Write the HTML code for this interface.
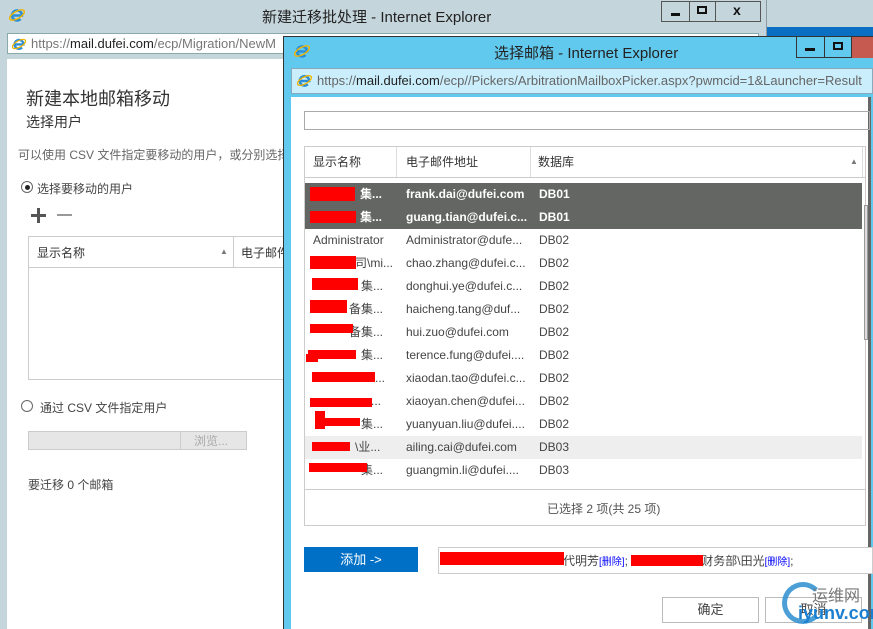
<!DOCTYPE html>
<html><head><meta charset="utf-8"><style>
*{margin:0;padding:0;box-sizing:border-box}
body{width:873px;height:629px;overflow:hidden;position:relative;background:#c5d5dc;font-family:"Liberation Sans","Noto Sans CJK SC",sans-serif;color:#444}
.a{position:absolute;white-space:nowrap}
.r{position:absolute;background:#f00}
.row{position:absolute;left:305px;width:557px;height:23px;font-size:12px;line-height:23px}
.row span{position:absolute}
.row .c2{left:101px}.row .c3{left:234px}
.sel{background:#646663;color:#fff;font-weight:bold}
</style></head><body>
<svg width="0" height="0" style="position:absolute"><defs><symbol id="ie" viewBox="0 0 18 18"><path d="M4 9.5 H14 A5 5 0 1 0 12.5 13" fill="none" stroke="#2a8fd6" stroke-width="2.6"/><ellipse cx="9" cy="9" rx="8.2" ry="3.6" fill="none" stroke="#f0b400" stroke-width="1.4" transform="rotate(-30 9 9)"/></symbol></defs></svg>
<!-- back window -->
<div class="a" style="left:0;top:0;width:767px;height:629px;background:#c5d5dc;border-right:1px solid #8a9aa0"></div>
<div class="a" style="left:767px;top:27px;width:106px;height:9px;background:#0a6fc2"></div>
<svg class="a" style="left:8px;top:6px" width="18" height="18"><use href="#ie"/></svg>
<div class="a" style="left:262px;top:6px;font-size:15px;color:#222">新建迁移批处理 - Internet Explorer</div>
<div class="a" style="left:661px;top:1px;width:100px;height:21px;border:1px solid #555;background:#c5d5dc"></div>
<div class="a" style="left:689px;top:1px;width:1px;height:21px;background:#555"></div>
<div class="a" style="left:715px;top:1px;width:1px;height:21px;background:#555"></div>
<div class="a" style="left:671px;top:13px;width:9px;height:3px;background:#111"></div>
<div class="a" style="left:697px;top:6px;width:10px;height:8px;border:2px solid #111"></div>
<div class="a" style="left:733px;top:2px;font-size:14px;font-weight:bold;color:#111">x</div>
<div class="a" style="left:7px;top:33px;width:752px;height:21px;background:#fff;border:1px solid #8aa"></div>
<svg class="a" style="left:11px;top:36px" width="16" height="16" viewBox="0 0 18 18"><use href="#ie"/></svg>
<div class="a" style="left:31px;top:36px;font-size:13px;color:#777">https://<span style="color:#222">mail.dufei.com</span>/ecp/Migration/NewM</div>
<div class="a" style="left:7px;top:59px;width:280px;height:570px;background:#fff"></div>
<div class="a" style="left:26px;top:85px;font-size:18px;color:#333">新建本地邮箱移动</div>
<div class="a" style="left:26px;top:112px;font-size:14px;color:#333">选择用户</div>
<div class="a" style="left:18px;top:146px;font-size:12px;color:#666">可以使用 CSV 文件指定要移动的用户，或分别选择</div>
<div class="a" style="left:21px;top:181px;width:12px;height:12px;border:1px solid #666;border-radius:50%"></div>
<div class="a" style="left:24.5px;top:184.5px;width:5px;height:5px;background:#222;border-radius:50%"></div>
<div class="a" style="left:37px;top:180px;font-size:12px">选择要移动的用户</div>
<div class="a" style="left:31px;top:214px;width:15px;height:3px;background:#555"></div>
<div class="a" style="left:37px;top:208px;width:3px;height:15px;background:#555"></div>
<div class="a" style="left:57px;top:214px;width:15px;height:2px;background:#999"></div>
<div class="a" style="left:28px;top:236px;width:260px;height:144px;border:1px solid #ccc"></div>
<div class="a" style="left:28px;top:267px;width:260px;height:1px;background:#ccc"></div>
<div class="a" style="left:233px;top:237px;width:1px;height:30px;background:#ccc"></div>
<div class="a" style="left:37px;top:244px;font-size:12px;color:#333">显示名称</div>
<div class="a" style="left:220px;top:247px;font-size:8px;color:#777">▲</div>
<div class="a" style="left:241px;top:244px;font-size:12px;color:#333">电子邮件</div>
<div class="a" style="left:21px;top:400px;width:12px;height:12px;border:1px solid #666;border-radius:50%"></div>
<div class="a" style="left:40px;top:399px;font-size:12px">通过 CSV 文件指定用户</div>
<div class="a" style="left:28px;top:431px;width:219px;height:19px;background:#e6e6e6;border:1px solid #ccc"></div>
<div class="a" style="left:180px;top:431px;width:1px;height:19px;background:#ccc"></div>
<div class="a" style="left:194px;top:432px;font-size:12px;color:#aaa">浏览...</div>
<div class="a" style="left:28px;top:476px;font-size:12px">要迁移 0 个邮箱</div>

<!-- front window -->
<div class="a" style="left:283px;top:36px;width:590px;height:593px;background:#62c9ee;border-left:1px solid #333;border-top:1px solid #333"></div>
<svg class="a" style="left:293px;top:42px" width="18" height="18"><use href="#ie"/></svg>
<div class="a" style="left:494px;top:42px;font-size:15px;color:#222">选择邮箱 - Internet Explorer</div>
<div class="a" style="left:796px;top:36px;width:80px;height:22px;border:1px solid #333;background:#62c9ee"></div>
<div class="a" style="left:824px;top:36px;width:1px;height:22px;background:#333"></div>
<div class="a" style="left:851px;top:37px;width:22px;height:21px;background:#c75a50;border-left:1px solid #333"></div>
<div class="a" style="left:805px;top:48px;width:10px;height:3px;background:#111"></div>
<div class="a" style="left:833px;top:42px;width:10px;height:8px;border:2px solid #111"></div>
<div class="a" style="left:291px;top:68px;width:582px;height:26px;background:#cbeefc;border:1px solid #8ab"></div>
<svg class="a" style="left:296px;top:72px" width="17" height="17" viewBox="0 0 18 18"><use href="#ie"/></svg>
<div class="a" style="left:317px;top:73px;font-size:13px;color:#666">https://<span style="color:#222">mail.dufei.com</span>/ecp//Pickers/ArbitrationMailboxPicker.aspx?pwmcid=1&amp;Launcher=Result</div>
<div class="a" style="left:291px;top:97px;width:577px;height:532px;background:#fff"></div>
<div class="a" style="left:868px;top:97px;width:3px;height:532px;background:#666"></div>
<div class="a" style="left:304px;top:111px;width:566px;height:19px;border:1px solid #aaa"></div>
<div class="a" style="left:304px;top:146px;width:562px;height:380px;border:1px solid #ccc"></div>
<div class="a" style="left:305px;top:177px;width:560px;height:1px;background:#ccc"></div>
<div class="a" style="left:396px;top:147px;width:1px;height:30px;background:#ddd"></div>
<div class="a" style="left:530px;top:147px;width:1px;height:30px;background:#ddd"></div>
<div class="a" style="left:862px;top:147px;width:1px;height:30px;background:#ddd"></div>
<div class="a" style="left:313px;top:153px;font-size:12px;color:#333">显示名称</div>
<div class="a" style="left:406px;top:153px;font-size:12px;color:#333">电子邮件地址</div>
<div class="a" style="left:538px;top:153px;font-size:12px;color:#333">数据库</div>
<div class="a" style="left:850px;top:157px;font-size:8px;color:#777">▲</div>
<div class="a" style="left:864px;top:205px;width:4px;height:135px;background:#ddd;border:1px solid #999"></div>

<div class="row sel" style="top:183px"><span style="left:55px">集...</span><span class="c2">frank.dai@dufei.com</span><span class="c3">DB01</span></div>
<div class="row sel" style="top:206px"><span style="left:55px">集...</span><span class="c2">guang.tian@dufei.c...</span><span class="c3">DB01</span></div>
<div class="row" style="top:229px"><span style="left:8px">Administrator</span><span class="c2">Administrator@dufe...</span><span class="c3">DB02</span></div>
<div class="row" style="top:252px"><span style="left:50px">司\mi...</span><span class="c2">chao.zhang@dufei.c...</span><span class="c3">DB02</span></div>
<div class="row" style="top:275px"><span style="left:56px">集...</span><span class="c2">donghui.ye@dufei.c...</span><span class="c3">DB02</span></div>
<div class="row" style="top:298px"><span style="left:44px">备集...</span><span class="c2">haicheng.tang@duf...</span><span class="c3">DB02</span></div>
<div class="row" style="top:321px"><span style="left:44px">备集...</span><span class="c2">hui.zuo@dufei.com</span><span class="c3">DB02</span></div>
<div class="row" style="top:344px"><span style="left:56px">集...</span><span class="c2">terence.fung@dufei....</span><span class="c3">DB02</span></div>
<div class="row" style="top:367px"><span style="left:70px">...</span><span class="c2">xiaodan.tao@dufei.c...</span><span class="c3">DB02</span></div>
<div class="row" style="top:390px"><span style="left:66px">...</span><span class="c2">xiaoyan.chen@dufei...</span><span class="c3">DB02</span></div>
<div class="row" style="top:413px"><span style="left:56px">集...</span><span class="c2">yuanyuan.liu@dufei....</span><span class="c3">DB02</span></div>
<div class="row" style="top:436px;background:#eee"><span style="left:50px">\业...</span><span class="c2">ailing.cai@dufei.com</span><span class="c3">DB03</span></div>
<div class="row" style="top:459px"><span style="left:56px">集...</span><span class="c2">guangmin.li@dufei....</span><span class="c3">DB03</span></div>

<div class="r" style="left:310px;top:187px;width:45px;height:14px"></div>
<div class="r" style="left:310px;top:211px;width:46px;height:12px"></div>
<div class="r" style="left:310px;top:256px;width:46px;height:13px"></div>
<div class="r" style="left:312px;top:278px;width:46px;height:12px"></div>
<div class="r" style="left:310px;top:300px;width:37px;height:13px"></div>
<div class="r" style="left:310px;top:324px;width:43px;height:9px"></div>
<div class="r" style="left:308px;top:350px;width:48px;height:9px"></div>
<div class="r" style="left:306px;top:354px;width:12px;height:8px"></div>
<div class="r" style="left:312px;top:372px;width:63px;height:10px"></div>
<div class="r" style="left:310px;top:398px;width:62px;height:9px"></div>
<div class="r" style="left:315px;top:411px;width:10px;height:18px"></div>
<div class="r" style="left:315px;top:418px;width:45px;height:8px"></div>
<div class="r" style="left:312px;top:442px;width:38px;height:9px"></div>
<div class="r" style="left:309px;top:463px;width:58px;height:9px"></div>

<div class="a" style="left:305px;top:489px;width:560px;height:1px;background:#ccc"></div>
<div class="a" style="left:547px;top:500px;font-size:12px;color:#555">已选择 2 项(共 25 项)</div>

<div class="a" style="left:304px;top:547px;width:114px;height:25px;background:#0070c6;color:#fff;font-size:13px;text-align:center;line-height:25px">添加 -&gt;</div>
<div class="a" style="left:438px;top:547px;width:435px;height:27px;border:1px solid #ccc;background:#fff"></div>
<div class="a" style="left:439px;top:552px;font-size:12px;color:#444"><span style="display:inline-block;width:124px"></span>代明芳<span style="color:#00f;font-size:10px">[删除]</span>; <span style="display:inline-block;width:70px"></span>财务部\田光<span style="color:#00f;font-size:10px">[删除]</span>;</div>
<div class="r" style="left:440px;top:552px;width:124px;height:13px"></div>
<div class="r" style="left:631px;top:555px;width:72px;height:11px"></div>

<div class="a" style="left:662px;top:597px;width:97px;height:26px;border:1px solid #bbb;font-size:13px;text-align:center;line-height:24px">确定</div>
<div class="a" style="left:765px;top:597px;width:97px;height:26px;border:1px solid #bbb;font-size:13px;text-align:center;line-height:24px">取消</div>
<div class="a" style="left:782px;top:582px;width:42px;height:42px;border:5px solid #2d8fd0;border-radius:50%;border-right-color:transparent;opacity:.85"></div>
<div class="a" style="left:812px;top:582px;font-size:16px;color:#777">运维网</div>
<div class="a" style="left:798px;top:603px;font-size:18px;color:#1a7fd0;font-weight:bold">iyunv.com</div>
</body></html>
